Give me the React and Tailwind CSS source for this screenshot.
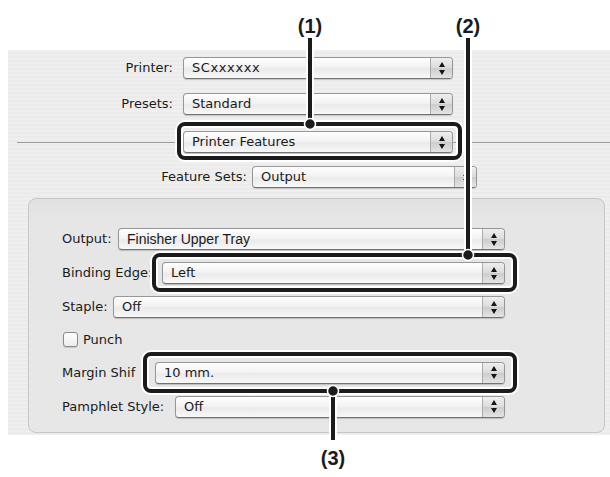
import React from 'react'

const ui = "font-['DejaVu_Sans','Noto_Sans',sans-serif] text-[13px] text-[#1a1a1a]"

// up / down arrows of an aqua popup button
function Arrows() {
  return (
    <div className="flex w-[22px] flex-col items-center justify-center gap-[3px] border-l border-[#ababab] bg-[linear-gradient(to_bottom,#eeeeee_0%,#dcdcdc_48%,#cdcdcd_52%,#e4e4e4_100%)]">
      <svg width="6" height="5" viewBox="0 0 6 5"><path d="M3 0 L6 5 L0 5 Z" fill="#151515" /></svg>
      <svg width="6" height="5" viewBox="0 0 6 5"><path d="M0 0 L6 0 L3 5 Z" fill="#151515" /></svg>
    </div>
  )
}

function Popup({ value, className = '', textClass = '' }) {
  return (
    <div className={`flex h-[22px] overflow-hidden rounded-[4px] border border-[#979797] border-b-[#727272] bg-[linear-gradient(to_bottom,#fefefe_0%,#f3f3f3_46%,#eaeaea_54%,#f8f8f8_100%)] shadow-[0_1px_1px_rgba(0,0,0,0.18)] ${className}`}>
      <div className={`flex-1 truncate pl-[8px] leading-[20px] ${textClass}`}>{value}</div>
      <Arrows />
    </div>
  )
}

function Row({ label, labelW, value, textClass }) {
  return (
    <div className="flex h-[22px] items-center">
      <div className={`${labelW} shrink-0 overflow-hidden whitespace-nowrap`}>{label}</div>
      <Popup value={value} className="flex-1" textClass={textClass} />
    </div>
  )
}

export default function App() {
  return (
    <div className={`relative h-[477px] w-[610px] overflow-hidden bg-white ${ui}`}>
      <div className="pl-[8px] pt-[50px]">
        <div className="h-[385px] bg-[repeating-linear-gradient(to_bottom,#efefef_0px,#efefef_2px,#ebebeb_2px,#ebebeb_4px)] pt-[7px]">
          {/* printer / presets */}
          <div className="flex h-[22px] items-center">
            <div className="w-[165px] text-right">Printer:</div>
            <Popup value="SCxxxxxx" className="ml-[10px] w-[270px]" textClass="tracking-[0.6px]" />
          </div>
          <div className="mt-[14px] flex h-[22px] items-center">
            <div className="w-[165px] text-right">Presets:</div>
            <Popup value="Standard" className="ml-[10px] w-[270px]" />
          </div>

          {/* separator with panel popup */}
          <div className="mt-[16px] flex h-[22px] items-center">
            <div className="ml-[9px] h-px w-[166px] bg-[#9d9d9d]" />
            <Popup value="Printer Features" className="w-[270px]" />
            <div className="h-px flex-1 bg-[#9d9d9d]" />
          </div>

          <div className="mt-[13px] flex h-[22px] items-center">
            <div className="w-[239px] text-right">Feature Sets:</div>
            <Popup value="Output" className="ml-[5px] w-[225px]" />
          </div>

          {/* feature panel */}
          <div className="ml-[20px] mt-[10px] flex h-[235px] w-[577px] flex-col gap-[12px] rounded-[8px] border border-[#c6c6c6] bg-[linear-gradient(to_bottom,#e1e1e1_0px,#e6e6e6_20px,#e7e7e7_100%)] pb-[15px] pl-[33px] pr-[99px] pt-[29px]">
            <Row label="Output:" labelW="w-[56px]" value="Finisher Upper Tray" textClass="font-['Liberation_Sans',Arial,sans-serif] text-[14px]" />
            <Row label="Binding Edge:" labelW="w-[100px]" value="Left" />
            <Row label="Staple:" labelW="w-[51px]" value="Off" />
            <div className="flex h-[20px] items-center gap-[5px] pl-px">
              <div className="h-[15px] w-[15px] rounded-[3px] border border-[#8a8a8a] bg-[linear-gradient(to_bottom,#ffffff,#ececec)] shadow-[0_1px_1px_rgba(0,0,0,0.15)]" />
              <span>Punch</span>
            </div>
            <Row label="Margin Shif" labelW="w-[93px]" value="10 mm." />
            <Row label="Pamphlet Style:" labelW="w-[113px]" value="Off" />
          </div>
        </div>
      </div>

      {/* callouts */}
      <svg className="pointer-events-none absolute left-0 top-0" width="610" height="477" viewBox="0 0 610 477">
        <g fill="none" stroke="#ffffff" strokeWidth="8">
          <rect x="179" y="124" width="281" height="34" rx="6" />
          <rect x="154" y="255" width="361" height="35" rx="6" />
          <rect x="145" y="354" width="370" height="37" rx="6" />
          <line x1="310" y1="38" x2="310" y2="124" />
          <line x1="468" y1="38" x2="468" y2="255" />
          <line x1="333" y1="391" x2="333" y2="440" />
        </g>
        <g fill="none" stroke="#1b1b1b" strokeWidth="4">
          <rect x="179" y="124" width="281" height="34" rx="6" />
          <rect x="154" y="255" width="361" height="35" rx="6" />
          <rect x="145" y="354" width="370" height="37" rx="6" />
          <line x1="310" y1="38" x2="310" y2="124" />
          <line x1="468" y1="38" x2="468" y2="255" />
          <line x1="333" y1="391" x2="333" y2="440" />
        </g>
        <g fill="#1b1b1b" stroke="#ffffff" strokeWidth="1.5">
          <circle cx="310" cy="124" r="5.5" />
          <circle cx="468" cy="255" r="5.5" />
          <circle cx="333" cy="391" r="5.5" />
        </g>
      </svg>
      <div className="absolute left-[285px] top-[14px] w-[50px] text-center font-['Liberation_Sans',Arial,sans-serif] text-[20px] font-bold leading-[24px] text-[#1b1b1b]">(1)</div>
      <div className="absolute left-[443px] top-[14px] w-[50px] text-center font-['Liberation_Sans',Arial,sans-serif] text-[20px] font-bold leading-[24px] text-[#1b1b1b]">(2)</div>
      <div className="absolute left-[308px] top-[446px] w-[50px] text-center font-['Liberation_Sans',Arial,sans-serif] text-[20px] font-bold leading-[24px] text-[#1b1b1b]">(3)</div>
    </div>
  )
}
